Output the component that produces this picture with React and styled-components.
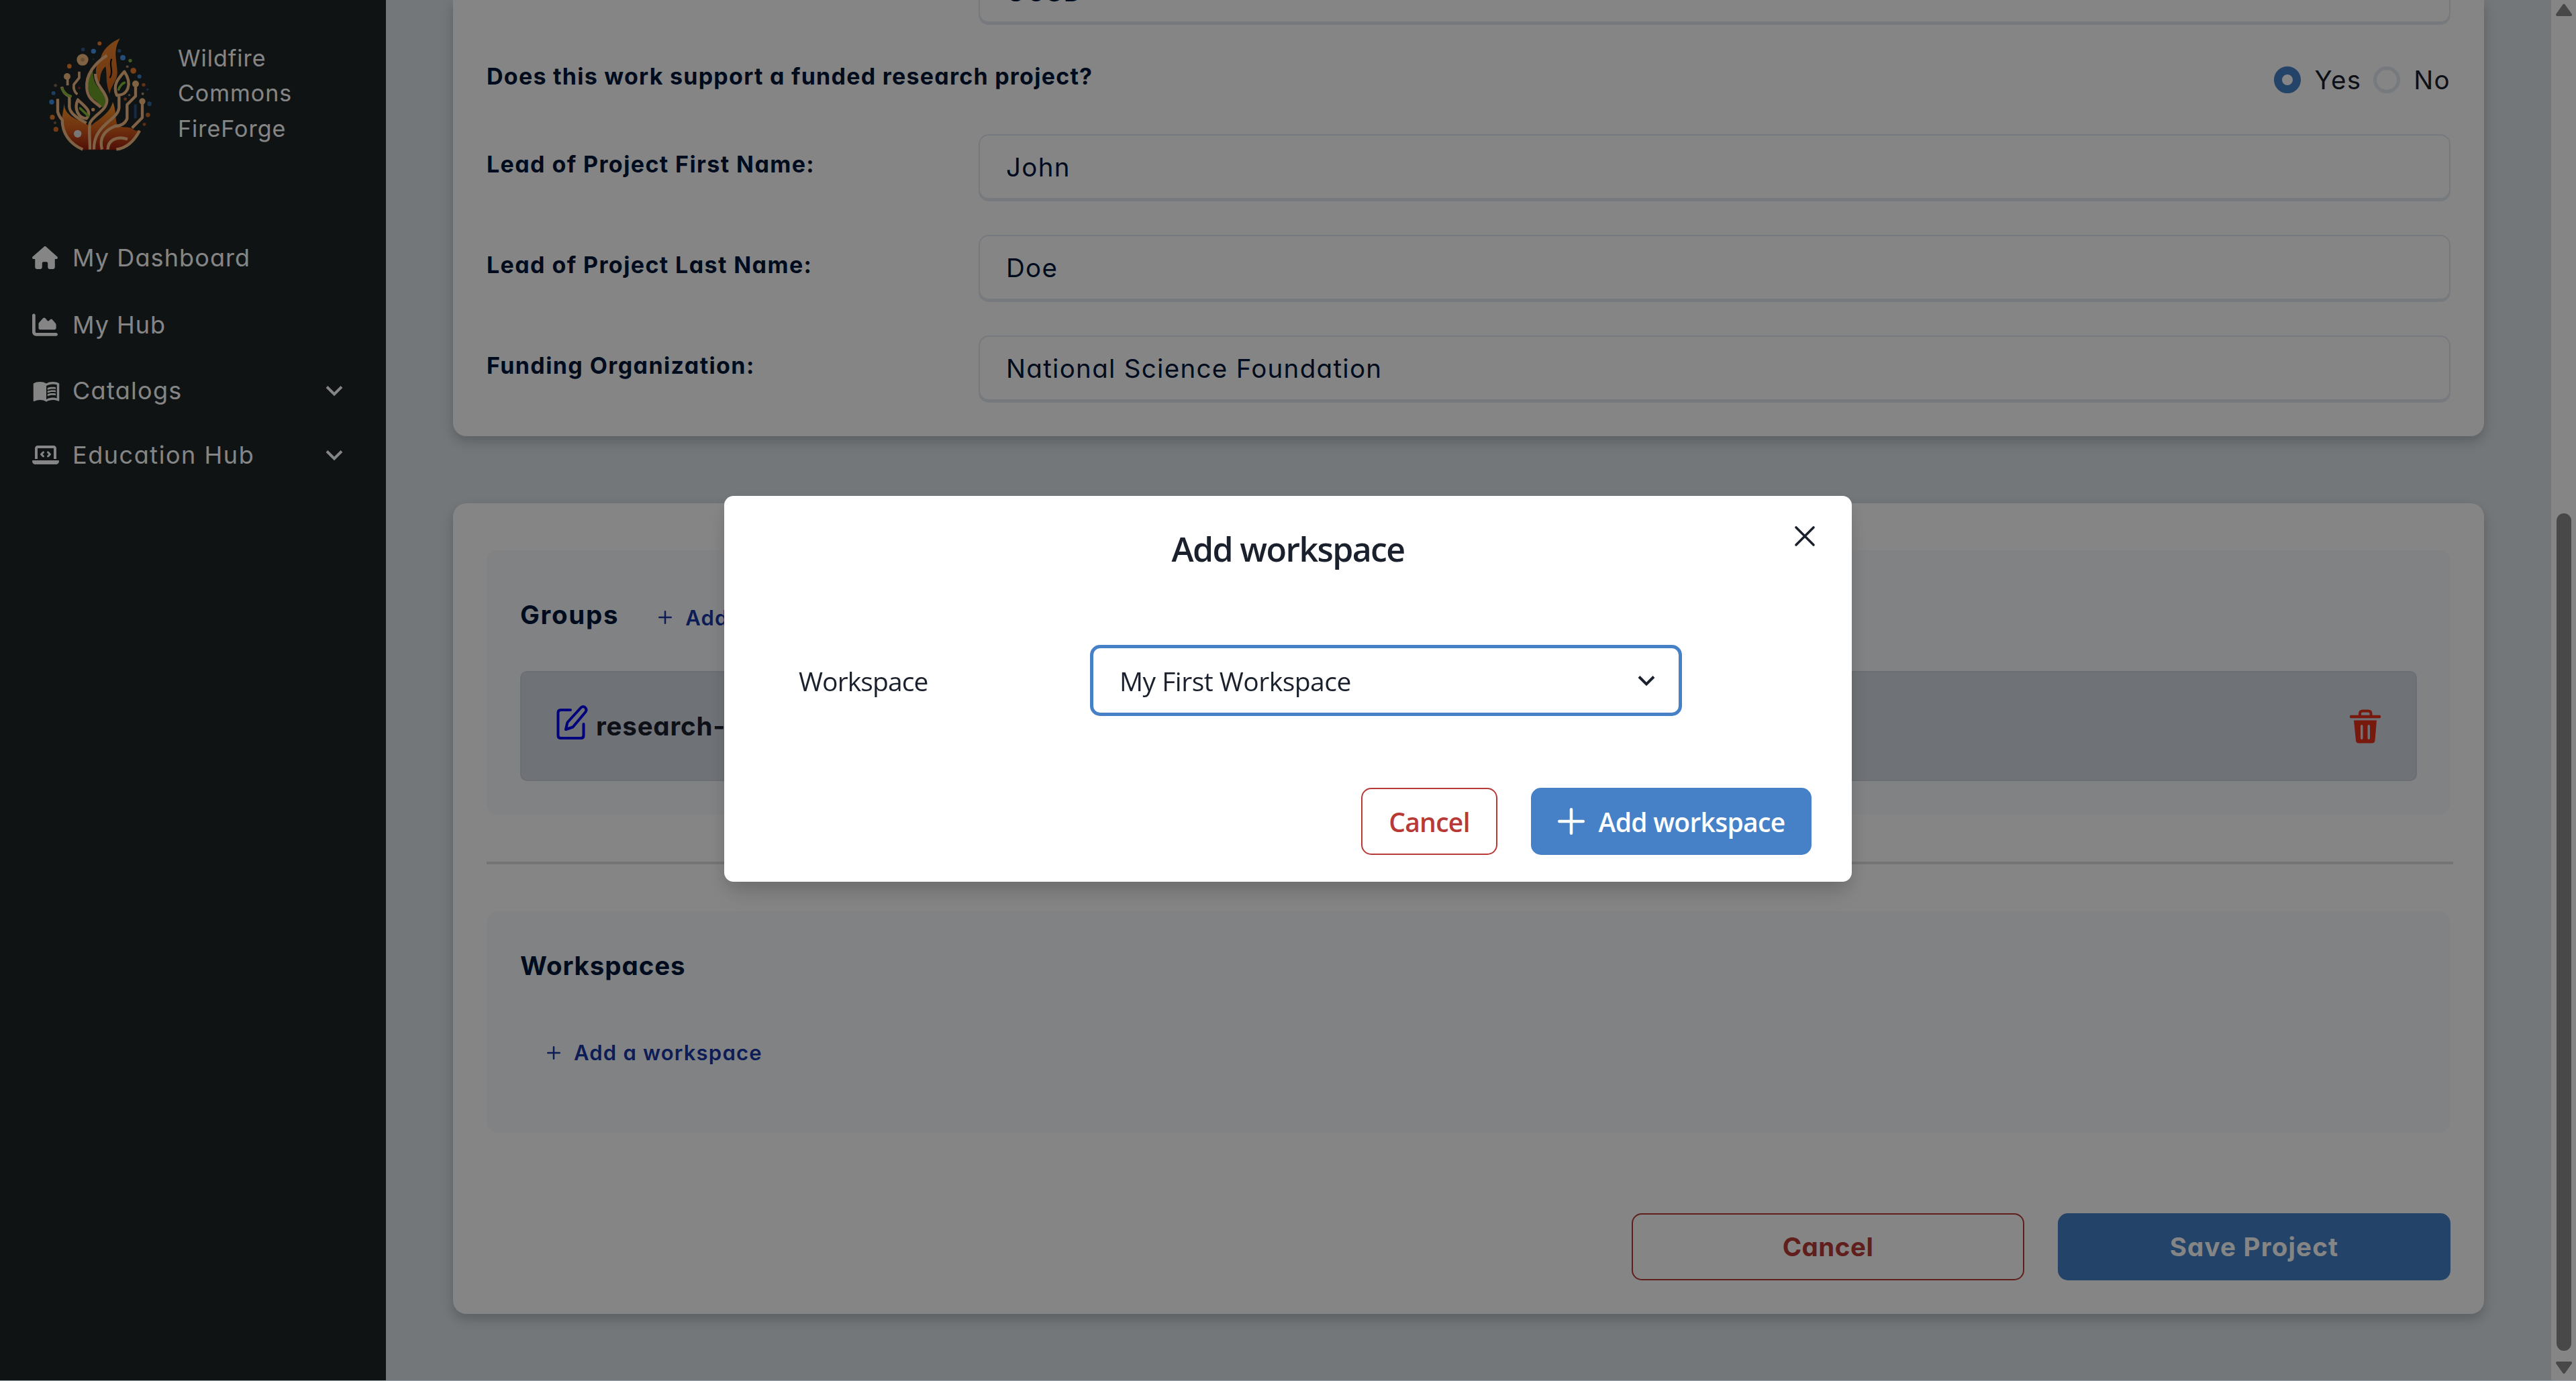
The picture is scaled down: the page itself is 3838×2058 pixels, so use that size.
import React from "react";
import styled, { createGlobalStyle, css } from "styled-components";
import { FaHouse, FaChartArea, FaLaptopCode } from "react-icons/fa6";
import { MdMenuBook } from "react-icons/md";

const ui = '"Inter", "Noto Sans", sans-serif';
const dialogFont = '"Open Sans", "Noto Sans", sans-serif';

const GlobalStyle = createGlobalStyle`
  * { box-sizing: border-box; }
  body {
    margin: 0;
    background: #dde3e8;
    overflow: hidden;
    font-family: ${ui};
    font-feature-settings: "cv11" 1;
  }
  button { font-family: inherit; font-feature-settings: inherit; cursor: pointer; }
  svg { display: block; flex: none; }
`;

const Page = styled.div`
  display: flex;
  width: 3838px;
  height: 2058px;
  overflow: hidden;
  background: #dde4e9;
`;

const Sidebar = styled.aside`
  width: 575px;
  flex: none;
  background: #1d2628;
  color: #fff;
`;

const Brand = styled.div`
  display: flex;
  align-items: center;
  gap: 25px;
  height: 334px;
  padding: 0 0 57px 60px;
`;

const BrandName = styled.div`
  padding-top: 2px;
  font-size: 34px;
  line-height: 52.5px;
  letter-spacing: 1px;
  span { display: block; }
`;

const NavItem = styled.a`
  display: flex;
  align-items: center;
  height: ${(p) => p.$h}px;
  padding: 0 64px 0 48px;
  font-size: 36px;
  letter-spacing: ${(p) => p.$tracking}px;
`;
const NavIcon = styled.span`
  display: flex;
  width: 60px;
`;
const NavLabel = styled.span`
  flex: 1;
`;

const Main = styled.main`
  display: flex;
  flex-direction: column;
  flex: 1;
  min-width: 0;
  padding: 0 100px;
  color: #00173b;
`;

const Card = styled.section`
  display: flex;
  flex-direction: column;
  flex: none;
  padding: 0 50px;
  background: #fff;
  border-radius: 20px;
  box-shadow: 0 8px 18px rgba(0, 0, 0, 0.2);
`;
const DetailsCard = styled(Card)`
  height: 650px;
  border-radius: 0 0 20px 20px;
`;
const SharingCard = styled(Card)`
  height: 1208px;
  margin-top: 100px;
  padding-top: 70px;
`;

const FieldRow = styled.div`
  display: grid;
  grid-template-columns: 733px 1fr;
  align-items: center;
  flex: none;
  height: 100px;
  margin-bottom: 50px;
`;
const FirstRow = styled(FieldRow)`
  margin-top: -63px;
`;
const QuestionRow = styled.div`
  display: flex;
  justify-content: space-between;
  align-items: center;
  flex: none;
  height: 63px;
  margin-bottom: 50px;
`;
const Label = styled.label`
  padding-bottom: 12px;
  font-size: 34px;
  font-weight: 700;
  letter-spacing: 1.4px;
`;
const QuestionLabel = styled(Label)`
  padding-bottom: 10px;
  letter-spacing: 1.25px;
`;
const Field = styled.div`
  display: flex;
  align-items: center;
  height: 97px;
  margin-bottom: 3px;
  padding: ${(p) => (p.$low ? 4 : 0)}px 39px 0;
  border: 2px solid #e2e8f0;
  border-radius: 15px;
  box-shadow: 0 3px 0 #e2e8f0;
  font-size: 38.5px;
  letter-spacing: 1.3px;
`;

const RadioGroup = styled.div`
  display: flex;
  align-items: center;
  color: #1a202c;
  font-size: 38.5px;
  letter-spacing: 1.3px;
`;
const Radio = styled.span`
  width: 40px;
  height: 40px;
  margin-right: 20px;
  border-radius: 50%;
  border: ${(p) => (p.$on ? "12.5px solid #4681c8" : "5px solid #e2e8f0")};
`;
const RadioText = styled.span`
  margin-right: ${(p) => (p.$last ? 0 : 18)}px;
`;

const Panel = styled.div`
  flex: none;
  height: ${(p) => p.$h}px;
  padding: 0 50px;
  border-radius: 16px;
  background: #f8fafc;
`;
const PanelHead = styled.div`
  display: flex;
  align-items: center;
  height: 180px;
  padding-top: 11px;
`;
const WorkspaceHead = styled(PanelHead)`
  height: 160px;
  padding-top: 1px;
`;
const PanelTitle = styled.h2`
  margin: 0;
  font-size: 38.5px;
  font-weight: 700;
  letter-spacing: ${(p) => p.$tracking}px;
`;
const AddLink = styled.button`
  display: flex;
  align-items: center;
  gap: 20px;
  margin: ${(p) => p.$m};
  padding: 0;
  border: 0;
  background: none;
  color: #1736a8;
  font-size: 31px;
  font-weight: 600;
  letter-spacing: 1.2px;
`;

const GroupRow = styled.div`
  display: flex;
  align-items: center;
  justify-content: space-between;
  height: 164px;
  padding: 0 52px;
  border: 2px solid #cdd3df;
  border-radius: 10px;
  background: #d5dae3;
  color: #1a202c;
`;
const GroupName = styled.div`
  display: flex;
  align-items: center;
  gap: 12px;
  font-size: 38.5px;
  font-weight: 700;
  letter-spacing: 0.8px;
  svg { margin-bottom: 9px; }
`;

const Divider = styled.hr`
  flex: none;
  width: 2930px;
  height: 4px;
  margin: 70px 0;
  border: 0;
  background: #dedede;
`;

const Actions = styled.div`
  display: flex;
  justify-content: flex-end;
  gap: 50px;
  margin-top: 120px;
`;
const outline = css`
  border: 2.5px solid #b83a36;
  background: #fff;
  color: #b83a36;
`;
const solid = css`
  border: 0;
  background: #4681c8;
  color: #fff;
`;
const Button = styled.button`
  display: flex;
  align-items: center;
  justify-content: center;
  width: ${(p) => p.$w}px;
  height: 100px;
  padding: 0;
  border-radius: 15px;
  font-size: 38.5px;
  font-weight: 700;
  letter-spacing: ${(p) => (p.$solid ? 1.2 : 0.5)}px;
  ${(p) => (p.$solid ? solid : outline)}
`;

const Scrollbar = styled.div`
  display: flex;
  flex: none;
  flex-direction: column;
  align-items: center;
  width: 37px;
  padding: 6px 0 11px 1px;
  background: #fff;
`;
const Thumb = styled.div`
  width: 22px;
  height: 1248px;
  margin: 741px 0 16px;
  border-radius: 11px;
  background: #8a8a8a;
`;

const Overlay = styled.div`
  position: fixed;
  inset: 0;
  display: flex;
  align-items: flex-start;
  justify-content: center;
  padding-top: 739px;
  background: rgba(0, 0, 0, 0.48);
  border-bottom: 1px solid #9aa4a8;
`;
const Dialog = styled.div`
  position: relative;
  width: 1680px;
  height: 575px;
  border-radius: 14px;
  background: #fff;
  color: #1a202c;
  font-family: ${dialogFont};
  box-shadow: 0 25px 38px -8px rgba(0, 0, 0, 0.12), 0 10px 25px rgba(0, 0, 0, 0.1);
`;
const DialogTitle = styled.h1`
  display: flex;
  align-items: center;
  justify-content: center;
  height: 158px;
  margin: 0 0 64px;
  font-size: 50px;
  font-weight: 600;
  letter-spacing: -1.6px;
`;
const CloseButton = styled.button`
  position: absolute;
  top: 44px;
  right: 54px;
  padding: 0;
  border: 0;
  background: none;
  color: inherit;
`;
const DialogField = styled.div`
  display: flex;
  align-items: center;
  height: 106px;
  padding-left: 111px;
  font-size: 39px;
`;
const DialogLabel = styled.label`
  width: 434px;
  letter-spacing: -0.9px;
`;
const Select = styled.div`
  display: flex;
  align-items: center;
  justify-content: space-between;
  width: 882px;
  height: 106px;
  padding: 0 35px 0 39px;
  border: 5px solid #4681c8;
  border-radius: 15px;
  letter-spacing: -0.5px;
`;
const DialogFooter = styled.div`
  display: flex;
  justify-content: flex-end;
  gap: 50px;
  margin-top: 107px;
  padding-right: 60px;
`;
const DialogButton = styled(Button)`
  gap: 21px;
  font-size: 39px;
  font-weight: 600;
  letter-spacing: -0.7px;
`;

const Plus = ({ size, stroke }) => (
  <svg width={size} height={size} viewBox={`0 0 ${size} ${size}`} stroke="currentColor" strokeWidth={stroke} strokeLinecap="round">
    <path d={`M${size / 2} ${stroke / 2}V${size - stroke / 2}M${stroke / 2} ${size / 2}H${size - stroke / 2}`} />
  </svg>
);

const Close = () => (
  <svg width="32" height="32" viewBox="0 0 32 32" stroke="currentColor" strokeWidth="3.6" strokeLinecap="round">
    <path d="M3 3L29 29M29 3L3 29" />
  </svg>
);

const Chevron = () => (
  <svg width="26" height="17" viewBox="0 0 26 17" fill="none" stroke="currentColor" strokeWidth="4">
    <path d="M2 2.5L13 13.5L24 2.5" />
  </svg>
);

const EditIcon = () => (
  <svg width="47" height="55" viewBox="0 0 47 55" fill="none" stroke="#0000ee" strokeWidth="4" strokeLinecap="round" strokeLinejoin="round">
    <path d="M21 8H6.500Q2.500 8 2.500 12V46Q2.500 50 6.500 50H36.500Q40.500 50 40.500 46V29" />
    <path d="M36.500 4.500Q40 1.500 43 4.500Q46 8 43 11.500L24.500 33.500L14 37L16.500 26.500Z" />
  </svg>
);

const TrashIcon = () => (
  <svg width="46" height="51" viewBox="0 0 46 51">
    <path d="M15 10V6.500Q15 2.500 19 2.500H27.500Q31.500 2.500 31.500 6.500V10" fill="none" stroke="#e6301b" strokeWidth="4" />
    <path d="M2 11H44" stroke="#e6301b" strokeWidth="4.400" strokeLinecap="round" />
    <path fill="#e6301b" fillRule="evenodd" d="M6 16.500H40L37.500 46.500Q37 50.500 33 50.500H13Q9.500 50.500 9 46.500ZM16 25V43Q16 45 17.700 45Q19.500 45 19.500 43V25Q19.500 23 17.700 23Q16 23 16 25ZM26.500 25V43Q26.500 45 28.200 45Q30 45 30 43V25Q30 23 28.200 23Q26.500 23 26.500 25Z" />
  </svg>
);

const embers = [
  [265, 56, 9, "#f08030"], [130, 158, 10, "#f08030"], [416, 178, 13, "#e87a2a"], [462, 241, 8, "#c0602c"],
  [54, 386, 11, "#ea7c2c"], [70, 440, 11, "#d8702c"], [481, 376, 10, "#c8662c"], [465, 418, 7, "#b85a28"],
  [380, 305, 7, "#b4582c"], [174, 255, 6, "#90341c"], [238, 91, 11, "#4898e8"], [191, 83, 8, "#2c6096"],
  [353, 89, 8, "#2c6098"], [369, 120, 12, "#4494e4"], [443, 204, 9, "#3c84d0"], [59, 278, 9, "#3878b8"],
  [51, 318, 11, "#3c8ce0"], [488, 326, 10, "#34669c"], [479, 262, 5, "#2c5888"], [402, 133, 8, "#86ac44"],
  [389, 160, 6, "#a08468"], [68, 244, 7, "#806c58"], [458, 281, 6, "#b0906c"], [66, 411, 6, "#806850"],
  [398, 287, 5, "#a08468"], [238, 126, 4, "#28486c"],
];

const Logo = () => (
  <svg width="180" height="185" viewBox="0 0 540 555" fill="none" strokeLinecap="round" strokeLinejoin="round">
    <defs>
      <linearGradient id="base" x1="0" y1="0" x2="0" y2="1">
        <stop offset="0" stopColor="#ffa030" />
        <stop offset="0.55" stopColor="#d8601c" />
        <stop offset="1" stopColor="#9c1c10" />
      </linearGradient>
      <linearGradient id="tip" x1="0" y1="0" x2="0" y2="1">
        <stop offset="0" stopColor="#f08830" />
        <stop offset="1" stopColor="#d8641c" />
      </linearGradient>
    </defs>
    <path fill="url(#base)" d="M108 322C104 352 124 378 162 396C192 408 208 416 222 428C252 400 312 372 324 318C340 352 332 392 346 424C372 436 392 426 412 438C424 448 436 448 446 444C424 490 396 512 350 532H192C130 506 98 462 94 408Z" />
    <path fill="url(#tip)" d="M356 34C310 54 276 88 270 124C240 158 246 204 262 238C272 214 262 186 292 158C300 202 290 224 310 282C318 240 348 220 344 178C342 130 324 90 356 34Z" />
    <path stroke="#141210" strokeWidth="7" d="M318 128C306 158 330 178 312 208" />
    <path fill="#6da028" d="M236 168C206 208 206 262 232 300C260 318 262 330 278 342C302 318 294 290 270 264C244 242 232 210 236 168Z" />
    <g stroke="#f4bc84" strokeWidth="13" strokeLinecap="butt">
      <path d="M298 110C244 144 202 196 208 256C212 310 252 320 270 342" />
      <path d="M246 192C246 244 292 268 298 308C300 356 240 374 222 412C216 440 222 480 222 530" />
      <path d="M78 304V362Q84 384 98 398C98 460 134 506 190 530" />
      <path d="M96 250Q100 276 130 294V340C132 376 188 402 206 412" />
      <path d="M168 308C150 346 168 390 206 392C236 360 196 336 168 308Z" />
      <path d="M376 182C350 212 322 240 342 288C390 290 414 240 376 182Z" />
      <path d="M352 292V344C348 400 236 420 240 530" />
      <path d="M426 246V292L388 330V392Q376 424 334 426C286 446 262 478 276 530" />
      <path d="M456 322V388L410 434" />
      <path d="M122 212V244M174 182V210L150 240Q146 268 166 284" strokeWidth="11" />
      <path d="M444 446C416 500 382 524 340 530M302 530C302 490 340 468 390 484" />
    </g>
    <path stroke="#86b838" strokeWidth="11" d="M98 258Q106 282 136 292M178 346L214 380M350 262Q360 238 376 232" />
    <g fill="#f4bc80">
      <circle cx="189" cy="129" r="26" />
      <circle cx="120" cy="204" r="15" />
      <circle cx="426" cy="237" r="15" />
      <circle cx="456" cy="315" r="14" />
      <circle cx="236" cy="352" r="8" />
    </g>
    <circle cx="189" cy="129" r="9" fill="#d09860" />
    <circle cx="167" cy="460" r="17" fill="#e8e4e0" />
    <path stroke="#2c5080" strokeWidth="12" d="M425 334V386" />
    {embers.map(([x, y, r, c]) => (
      <circle key={`${x}-${y}`} cx={x} cy={y} r={r} fill={c} />
    ))}
  </svg>
);

const nav = [
  { label: "My Dashboard", icon: <FaHouse size={38} />, h: 100, tracking: 1.1 },
  { label: "My Hub", icon: <FaChartArea size={38} />, h: 100, tracking: 1 },
  { label: "Catalogs", icon: <MdMenuBook size={42} />, h: 96, tracking: 1.3, more: true },
  { label: "Education Hub", icon: <FaLaptopCode size={40} />, h: 96, tracking: 1.55, more: true },
];

const fields = [
  ["Lead of Project First Name:", "John"],
  ["Lead of Project Last Name:", "Doe"],
  ["Funding Organization:", "National Science Foundation"],
];

export default function App() {
  return (
    <>
      <GlobalStyle />
      <Page>
        <Sidebar>
          <Brand>
            <Logo />
            <BrandName>
              <span>Wildfire</span>
              <span>Commons</span>
              <span>FireForge</span>
            </BrandName>
          </Brand>
          {nav.map((n) => (
            <NavItem key={n.label} $h={n.h} $tracking={n.tracking}>
              <NavIcon>{n.icon}</NavIcon>
              <NavLabel>{n.label}</NavLabel>
              {n.more && <Chevron />}
            </NavItem>
          ))}
        </Sidebar>
        <Main>
          <DetailsCard>
            <FirstRow>
              <span />
              <Field $low>UCSD</Field>
            </FirstRow>
            <QuestionRow>
              <QuestionLabel>Does this work support a funded research project?</QuestionLabel>
              <RadioGroup>
                <Radio $on />
                <RadioText>Yes</RadioText>
                <Radio />
                <RadioText $last>No</RadioText>
              </RadioGroup>
            </QuestionRow>
            {fields.map(([label, value]) => (
              <FieldRow key={label}>
                <Label>{label}</Label>
                <Field>{value}</Field>
              </FieldRow>
            ))}
          </DetailsCard>
          <SharingCard>
            <Panel $h={394}>
              <PanelHead>
                <PanelTitle $tracking={1.7}>Groups</PanelTitle>
                <AddLink $m="9px 0 0 59px">
                  <Plus size={20} stroke={2.5} />
                  Add
                </AddLink>
              </PanelHead>
              <GroupRow>
                <GroupName>
                  <EditIcon />
                  research-
                </GroupName>
                <TrashIcon />
              </GroupRow>
            </Panel>
            <Divider />
            <Panel $h={330}>
              <WorkspaceHead>
                <PanelTitle $tracking={0.9}>Workspaces</PanelTitle>
              </WorkspaceHead>
              <AddLink $m="32px 0 0 40px">
                <Plus size={20} stroke={2.5} />
                Add a workspace
              </AddLink>
            </Panel>
            <Actions>
              <Button $w={585}>Cancel</Button>
              <Button $w={585} $solid>Save Project</Button>
            </Actions>
          </SharingCard>
        </Main>
        <Scrollbar>
          <svg width="24" height="18" viewBox="0 0 24 18"><path fill="#8a8a8a" stroke="#8a8a8a" strokeWidth="4" strokeLinejoin="round" d="M12 2L22 16H2Z" /></svg>
          <Thumb />
          <svg width="24" height="18" viewBox="0 0 24 18"><path fill="#8a8a8a" stroke="#8a8a8a" strokeWidth="4" strokeLinejoin="round" d="M12 16L22 2H2Z" /></svg>
        </Scrollbar>
      </Page>
      <Overlay>
        <Dialog>
          <DialogTitle>Add workspace</DialogTitle>
          <CloseButton aria-label="Close"><Close /></CloseButton>
          <DialogField>
            <DialogLabel>Workspace</DialogLabel>
            <Select>
              My First Workspace
              <Chevron />
            </Select>
          </DialogField>
          <DialogFooter>
            <DialogButton $w={203}>Cancel</DialogButton>
            <DialogButton $w={418} $solid>
              <Plus size={40} stroke={4.5} />
              Add workspace
            </DialogButton>
          </DialogFooter>
        </Dialog>
      </Overlay>
    </>
  );
}
